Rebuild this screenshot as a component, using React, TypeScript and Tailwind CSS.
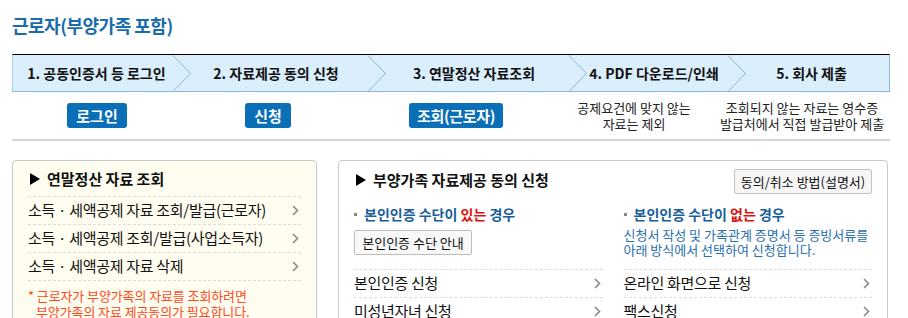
import React from "react";

const FONT = { fontFamily: '"Noto Sans CJK KR", "Noto Sans", sans-serif' };

function StepChevron() {
  return (
    <svg width="19" height="37" viewBox="0 0 19 37" className="shrink-0 block">
      <polyline points="0.5,0 18.5,18.5 0.5,37" fill="none" stroke="#8db6dc" strokeWidth="1" />
    </svg>
  );
}

function Step({ w, label, shift = 0 }: { w: string; label: string; shift?: number }) {
  return (
    <div className={`${w} flex items-center justify-center text-[14px] font-bold text-[#111]`}>
      <span className="whitespace-nowrap" style={{ transform: `translateX(${shift}px)` }}>{label}</span>
    </div>
  );
}

function Chev() {
  return (
    <svg width="7" height="11" viewBox="0 0 7 11" className="shrink-0">
      <polyline points="1,1 5.5,5.5 1,10" fill="none" stroke="#8a8a8a" strokeWidth="1.6" />
    </svg>
  );
}

function Triangle() {
  return (
    <svg width="10" height="12" viewBox="0 0 10 12" className="shrink-0">
      <polygon points="0,0 10,6 0,12" fill="#000" />
    </svg>
  );
}

function Row({ text }: { text: string }) {
  return (
    <div className="h-[28px] flex items-center justify-between pr-[2px] border-b border-dashed border-[#dcdcdc]">
      <span className="text-[15px] text-[#111] tracking-[-0.3px] whitespace-nowrap">{text}</span>
      <Chev />
    </div>
  );
}

function Bullet() {
  return <span className="inline-block w-[3px] h-[3px] bg-[#888] mr-[7px] align-middle relative top-[-2px]" />;
}

export default function App() {
  return (
    <div className="w-[908px] h-[318px] bg-white overflow-hidden px-[12px]" style={FONT}>
      <div className="pt-[12px] h-[54px]">
        <h1 className="text-[18px] leading-[26px] text-[#1a6cab] font-semibold tracking-[-0.5px]">근로자(부양가족 포함)</h1>
      </div>

      {/* step bar */}
      <div className="w-[878px] h-[38px] flex border-t border-t-black border-b border-b-[#8db6dc] border-l border-l-[#a8c8e6] border-r border-r-[#8db6dc] bg-[#dbeefc]">
        <Step w="w-[159px]" label="1. 공동인증서 등 로그인" shift={4} />
        <StepChevron />
        <Step w="w-[176px]" label="2. 자료제공 동의 신청" shift={-3} />
        <StepChevron />
        <Step w="w-[182px]" label="3. 연말정산 자료조회" shift={-3} />
        <StepChevron />
        <Step w="w-[140px]" label="4. PDF 다운로드/인쇄" shift={-3} />
        <StepChevron />
        <Step w="flex-1" label="5. 회사 제출" shift={-6} />
      </div>

      {/* actions row */}
      <div className="h-[47px] flex items-start">
        <span className="ml-[55px] mt-[11px] w-[60px] h-[25px] rounded-[3px] bg-[#0a6fb6] text-white text-[15px] font-bold leading-[25px] text-center">로그인</span>
        <span className="ml-[118px] mt-[11px] w-[46px] h-[25px] rounded-[3px] bg-[#0a6fb6] text-white text-[15px] font-bold leading-[25px] text-center">신청</span>
        <span className="ml-[118px] mt-[11px] w-[94px] h-[25px] rounded-[3px] bg-[#0a6fb6] text-white text-[15px] font-bold leading-[25px] text-center tracking-[-0.3px]">조회(근로자)</span>
        <div className="ml-[57px] w-[148px] flex flex-col items-center pt-[8px] text-[13px] leading-[16px] text-[#222] whitespace-nowrap">
          <span>공제요건에 맞지 않는</span>
          <span>자료는 제외</span>
        </div>
        <div className="ml-[14px] w-[160px] flex flex-col items-center pt-[8px] text-[13px] leading-[16px] text-[#222] whitespace-nowrap">
          <span>조회되지 않는 자료는 영수증</span>
          <span>발급처에서 직접 발급받아 제출</span>
        </div>
      </div>
      <div className="w-[878px] h-[2px] bg-[#d6d6d6]" />

      {/* panels */}
      <div className="flex gap-[21px] mt-[19px]">
        <div className="w-[305px] h-[200px] rounded-[4px] border border-[#c9c9c9] bg-[#fffdf0] px-[15px] pt-[8px]">
          <div className="h-[28px] flex items-start gap-[7px] border-b border-dashed border-[#dcdcdc]">
            <span className="mt-[4px] ml-[2px]"><Triangle /></span>
            <span className="text-[15px] font-bold text-[#111] leading-[20px] whitespace-nowrap">연말정산 자료 조회</span>
          </div>
          <Row text="소득 · 세액공제 자료 조회/발급(근로자)" />
          <Row text="소득 · 세액공제 조회/발급(사업소득자)" />
          <Row text="소득 · 세액공제 자료 삭제" />
          <div className="pt-[7px] text-[13px] leading-[16px] text-[#ff4a1c] tracking-[-0.1px] whitespace-nowrap">
            <div>* 근로자가 부양가족의 자료를 조회하려면</div>
            <div className="pl-[8px]">부양가족의 자료 제공동의가 필요합니다.</div>
          </div>
        </div>

        <div className="w-[550px] h-[200px] rounded-[4px] border border-[#c9c9c9] bg-white px-[15px] pt-[8px]">
          <div className="flex justify-between items-start h-[35px]">
            <div className="flex items-center gap-[7px] pl-[2px] mt-[1px]">
              <Triangle />
              <span className="text-[15px] font-bold text-[#111] leading-[20px] whitespace-nowrap">부양가족 자료제공 동의 신청</span>
            </div>
            <button className="w-[138px] h-[25px] border border-[#c3c3c3] bg-[#f6f6f6] text-[13px] text-[#111] rounded-[2px] whitespace-nowrap">
              동의/취소 방법(설명서)
            </button>
          </div>
          <div className="flex gap-[21px]">
            <div className="w-[249px]">
              <div className="h-[20px] text-[14px] font-bold leading-[20px] text-[#1a5e9c] whitespace-nowrap">
                <Bullet />본인인증 수단이 <span className="text-[#d11]">있는</span> 경우
              </div>
              <div className="h-[45px] pt-[5px]">
                <button className="w-[118px] h-[25px] border border-[#bdbdbd] bg-[#f8f8f8] text-[13px] text-[#111] rounded-[2px] whitespace-nowrap">
                  본인인증 수단 안내
                </button>
              </div>
              <div className="border-t border-dashed border-[#dcdcdc]" />
              <Row text="본인인증 신청" />
              <Row text="미성년자녀 신청" />
            </div>
            <div className="w-[249px]">
              <div className="h-[20px] text-[14px] font-bold leading-[20px] text-[#1a5e9c] whitespace-nowrap">
                <Bullet />본인인증 수단이 <span className="text-[#d11]">없는</span> 경우
              </div>
              <div className="h-[45px] text-[13px] leading-[15px] text-[#2a6fae] pt-[3px] whitespace-nowrap">
                <div>신청서 작성 및 가족관계 증명서 등 증빙서류를</div>
                <div>아래 방식에서 선택하여 신청합니다.</div>
              </div>
              <div className="border-t border-dashed border-[#dcdcdc]" />
              <Row text="온라인 화면으로 신청" />
              <Row text="팩스신청" />
            </div>
          </div>
        </div>
      </div>
    </div>
  );
}
